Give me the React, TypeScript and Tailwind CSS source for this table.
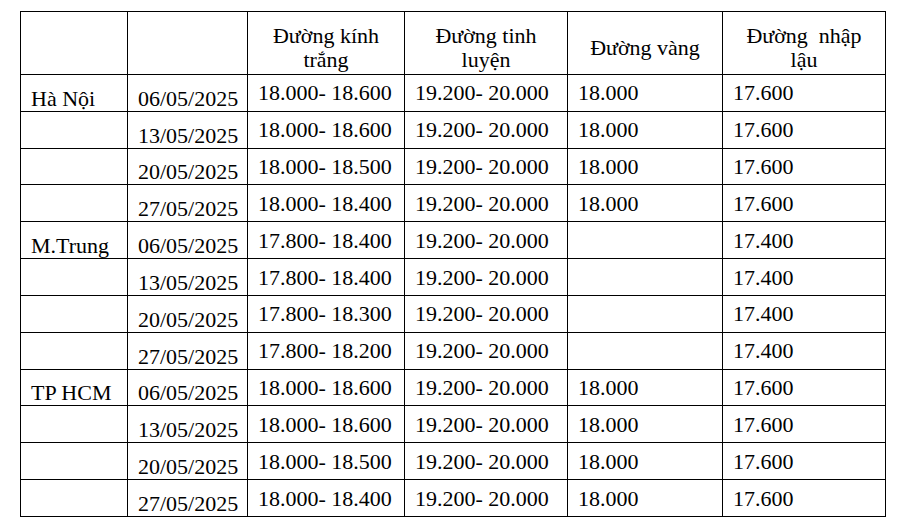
import React from "react";

type Row = {
  region?: string;
  date: string;
  kinh: string;
  tinh: string;
  vang: string;
  nhap: string;
};

const rows: Row[] = [
  { region: "Hà Nội", date: "06/05/2025", kinh: "18.000- 18.600", tinh: "19.200- 20.000", vang: "18.000", nhap: "17.600" },
  { date: "13/05/2025", kinh: "18.000- 18.600", tinh: "19.200- 20.000", vang: "18.000", nhap: "17.600" },
  { date: "20/05/2025", kinh: "18.000- 18.500", tinh: "19.200- 20.000", vang: "18.000", nhap: "17.600" },
  { date: "27/05/2025", kinh: "18.000- 18.400", tinh: "19.200- 20.000", vang: "18.000", nhap: "17.600" },
  { region: "M.Trung", date: "06/05/2025", kinh: "17.800- 18.400", tinh: "19.200- 20.000", vang: "", nhap: "17.400" },
  { date: "13/05/2025", kinh: "17.800- 18.400", tinh: "19.200- 20.000", vang: "", nhap: "17.400" },
  { date: "20/05/2025", kinh: "17.800- 18.300", tinh: "19.200- 20.000", vang: "", nhap: "17.400" },
  { date: "27/05/2025", kinh: "17.800- 18.200", tinh: "19.200- 20.000", vang: "", nhap: "17.400" },
  { region: "TP HCM", date: "06/05/2025", kinh: "18.000- 18.600", tinh: "19.200- 20.000", vang: "18.000", nhap: "17.600" },
  { date: "13/05/2025", kinh: "18.000- 18.600", tinh: "19.200- 20.000", vang: "18.000", nhap: "17.600" },
  { date: "20/05/2025", kinh: "18.000- 18.500", tinh: "19.200- 20.000", vang: "18.000", nhap: "17.600" },
  { date: "27/05/2025", kinh: "18.000- 18.400", tinh: "19.200- 20.000", vang: "18.000", nhap: "17.600" },
];

// header cell: centred, a bit pushed down like the source doc
function Head({ children }: { children?: React.ReactNode }) {
  return (
    <div className="bg-white flex items-center justify-center text-center pt-[10px] leading-[24px] whitespace-pre">
      {children}
    </div>
  );
}

// region + date columns sit on the bottom of the row
function Low({ children }: { children?: React.ReactNode }) {
  return <div className="bg-white flex items-end pl-[10px] whitespace-nowrap">{children}</div>;
}

// price columns are vertically centred
function Mid({ children }: { children?: React.ReactNode }) {
  return <div className="bg-white flex items-center pl-[10px] whitespace-nowrap">{children}</div>;
}

export default function App() {
  return (
    <div className="w-[900px] h-[531px] bg-white pl-[20px] pt-[11px] text-black font-['Liberation_Serif','Times_New_Roman',serif]">
      <div className="w-[866px] h-[506px] bg-black p-px grid gap-px grid-cols-[106px_119px_156px_162px_154px_162px] grid-rows-[62px_repeat(12,minmax(0,1fr))] text-[22px] leading-[25px]">
        <Head />
        <Head />
        <Head>{"Đường kính\ntrắng"}</Head>
        <Head>{"Đường tinh\nluyện"}</Head>
        <Head>{"Đường vàng"}</Head>
        <Head>{"Đường  nhập\nlậu"}</Head>

        {rows.map((r, i) => (
          <React.Fragment key={i}>
            <Low>{r.region ?? ""}</Low>
            <Low>{r.date}</Low>
            <Mid>{r.kinh}</Mid>
            <Mid>{r.tinh}</Mid>
            <Mid>{r.vang}</Mid>
            <Mid>{r.nhap}</Mid>
          </React.Fragment>
        ))}
      </div>
    </div>
  );
}
